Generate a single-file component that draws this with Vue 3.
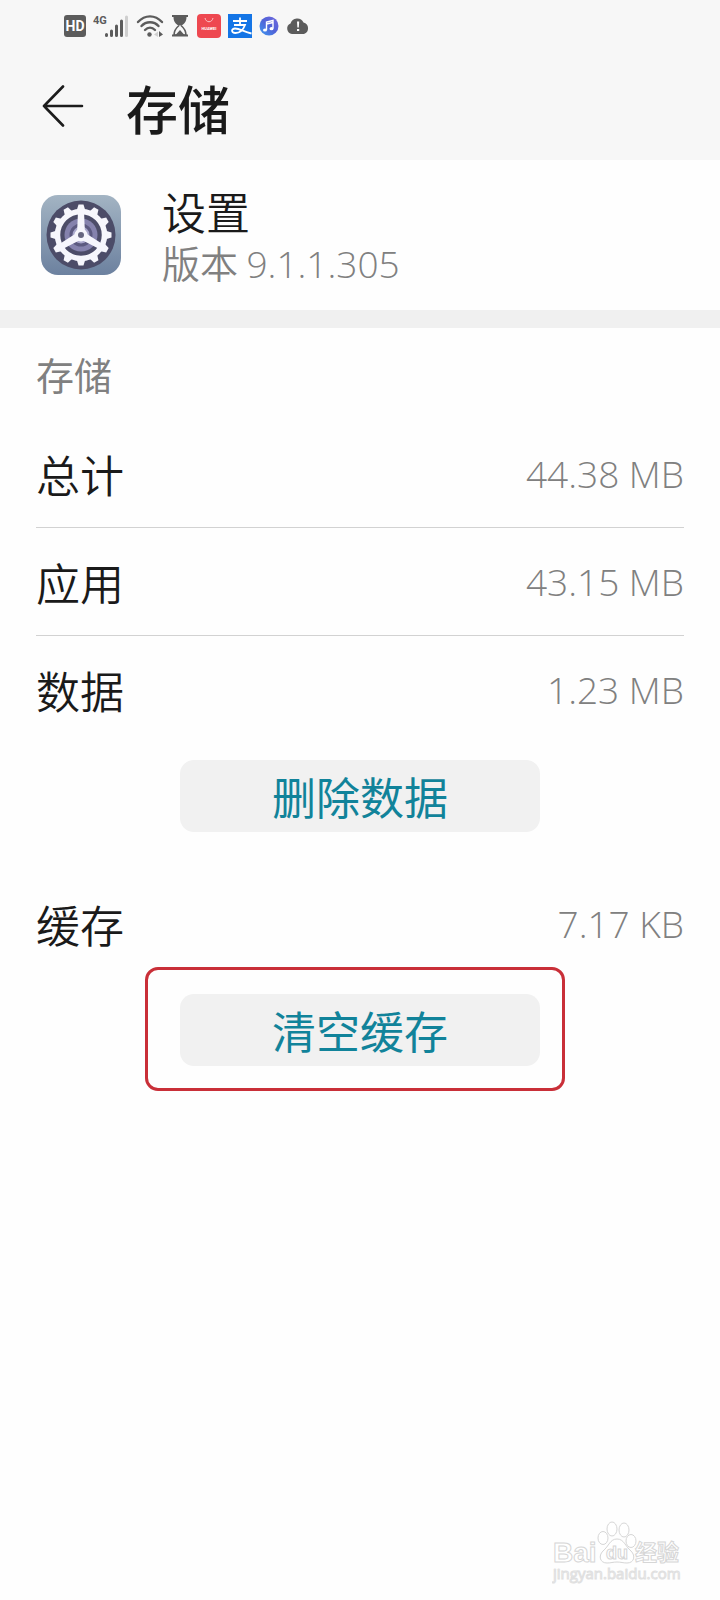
<script setup>
import { ref } from 'vue';

const sizes = [
    { id: 'total', label: '总计', value: '44.38 MB' },
    { id: 'app', label: '应用', value: '43.15 MB' },
    { id: 'data', label: '数据', value: '1.23 MB' },
];

const cacheSize = ref('7.17 KB');

const gearTeeth = Array.from({ length: 12 }, (_, index) => index * 30);
const gearSpokes = [0, 120, 240];
</script>

<template>
    <div class="storage-page">
        <header class="top">
            <div class="status-bar">
                <svg class="icon-hd" width="22" height="22" viewBox="0 0 22 22">
                    <rect width="22" height="22" rx="3" fill="#5c5c5c" />
                    <text x="11" y="16" class="hd-text" text-anchor="middle">HD</text>
                </svg>
                <svg class="icon-signal" width="36" height="24" viewBox="0 0 36 24">
                    <text x="0" y="10" class="signal-text">4G</text>
                    <g stroke="#5c5c5c" stroke-width="3" stroke-linecap="round">
                        <path d="M13.5 20.500V21.500M18.500 17V21.500M23.500 12V21.500M28.500 7V21.500" />
                        <path d="M33.500 3V21.500" stroke="#cfcfcf" />
                    </g>
                </svg>
                <svg class="icon-wifi" width="28" height="24" viewBox="0 0 28 24">
                    <g fill="none" stroke="#5c5c5c" stroke-width="2.400" stroke-linecap="round">
                        <path d="M2 8C9 .5 19 .5 26 8" />
                        <path d="M5.500 12C10 7 18 7 22.500 12" />
                        <path d="M9 16C12 13 16 13 19 16" />
                    </g>
                    <circle cx="13.500" cy="20.500" r="2.200" fill="#5c5c5c" />
                    <path d="M22 17.500L18 20.500L22 23Z" fill="#cfcfcf" />
                    <path d="M23 17L27 20.500L23 23Z" fill="#5c5c5c" />
                </svg>
                <svg class="icon-hourglass" width="18" height="22" viewBox="0 0 18 22">
                    <path d="M1 0H17V2H15.500C15.500 7 13 9 10.500 10.500H7.500C5 9 2.500 7 2.500 2H1Z" fill="#5c5c5c" />
                    <path d="M8 10.500C5 13 3 15 3 20H15C15 15 13 13 10 10.500" fill="none" stroke="#5c5c5c" stroke-width="1.600" />
                    <path d="M1 19.500H17V21.500H1ZM4.500 20L9 15L13.500 20Z" fill="#5c5c5c" />
                </svg>
                <svg class="icon-huawei" width="24" height="24" viewBox="0 0 24 24">
                    <rect width="24" height="24" rx="4" fill="#ee4850" />
                    <path d="M8 4C9 9 15 9 16 4" fill="none" stroke="#fbc4c6" stroke-width="1" />
                    <text x="12" y="16" class="huawei-text" text-anchor="middle">HUAWEI</text>
                </svg>
                <svg class="icon-alipay" width="24" height="24" viewBox="0 0 24 24">
                    <rect width="24" height="24" fill="#1475e6" />
                    <g fill="none" stroke="#fff" stroke-width="1.800">
                        <path d="M5 7H19M12 3.500V11M6 11H17C15.500 15 12 19 7.500 19C3 19 3 14.500 7 14.500C12 14.500 16 18 23.500 19.500" />
                    </g>
                </svg>
                <svg class="icon-music" width="20" height="20" viewBox="0 0 20 20">
                    <defs>
                        <linearGradient id="music-fill" x1="0" y1="1" x2="1" y2="0">
                            <stop offset="0" stop-color="#3d9af0" />
                            <stop offset="0.5" stop-color="#5063d8" />
                            <stop offset="1" stop-color="#7268dc" />
                        </linearGradient>
                    </defs>
                    <circle cx="10" cy="10" r="9.500" fill="url(#music-fill)" />
                    <path d="M7.500 14V6L14 4.500V12.500M7.500 8L14 6.500" fill="none" stroke="#fff" stroke-width="1.400" />
                    <ellipse cx="6" cy="14" rx="2" ry="1.600" fill="#fff" />
                    <ellipse cx="12.500" cy="12.700" rx="2" ry="1.600" fill="#fff" />
                </svg>
                <svg class="icon-cloud" width="24" height="18" viewBox="0 0 24 18">
                    <path d="M6 17A5.500 5.500 0 0 1 4.500 6.500A7 7 0 0 1 17.500 5.500A6 6 0 0 1 18 17Z" fill="#5c5c5c" />
                    <path d="M11 4.500H13.200L12.800 10.500H11.400ZM11 12H13.200V14H11Z" fill="#fff" />
                </svg>
            </div>
            <div class="title-bar">
                <button class="back-btn" type="button" aria-label="返回">
                    <svg width="42" height="42" viewBox="0 0 42 42">
                        <path d="M21 1.500L2 21L21 40.500M2 21H40" fill="none" stroke="#1c1c1c" stroke-width="2.600" stroke-linecap="round" stroke-linejoin="round" />
                    </svg>
                </button>
                <h1>存储</h1>
            </div>
        </header>

        <section class="app-info">
            <svg class="app-icon" width="82" height="82" viewBox="-1 -1 82 82">
                <defs>
                    <linearGradient id="icon-fill" x1="0" y1="0" x2="0" y2="1">
                        <stop offset="0" stop-color="#a3b4c3" />
                        <stop offset="1" stop-color="#6c819f" />
                    </linearGradient>
                </defs>
                <rect width="80" height="80" rx="17" fill="url(#icon-fill)" />
                <circle cx="40" cy="40" r="34.500" fill="#4c4c68" />
                <circle cx="40" cy="40" r="16.500" fill="#8582ad" />
                <circle cx="40" cy="40" r="11.500" fill="#5c5a80" />
                <circle cx="40" cy="40" r="8.500" fill="#aaa8cc" />
                <circle cx="40" cy="40" r="23.500" fill="none" stroke="#f6f6fc" stroke-width="5.500" />
                <g fill="#f6f6fc">
                    <path
                        v-for="angle in gearTeeth"
                        :key="angle"
                        d="M35.500 16L37.500 9.500H42.500L44.500 16Z"
                        :transform="`rotate(${angle} 40 40)`"
                    />
                    <path
                        v-for="angle in gearSpokes"
                        :key="angle"
                        d="M37 16H43L44 40H36Z"
                        :transform="`rotate(${angle} 40 40)`"
                    />
                    <circle cx="40" cy="40" r="6.500" />
                </g>
                <circle cx="40" cy="40" r="3" fill="#66667f" />
            </svg>
            <div class="app-text">
                <h2>设置</h2>
                <p>版本 <span class="number">9.1.1.305</span></p>
            </div>
        </section>

        <main class="storage">
            <h3>存储</h3>

            <div v-for="row in sizes" :key="row.id" class="row">
                <span>{{ row.label }}</span>
                <span class="number">{{ row.value }}</span>
            </div>
            <button class="action-btn" type="button">删除数据</button>

            <div class="row row-cache">
                <span>缓存</span>
                <span class="number">{{ cacheSize }}</span>
            </div>
            <button class="action-btn highlighted" type="button">清空缓存</button>
        </main>

        <footer class="watermark">
            <svg width="132" height="66" viewBox="0 0 132 66">
                <g fill="#fff" stroke="#d6d6d6" stroke-width="1">
                    <text x="1" y="42" class="mark-latin">Bai</text>
                    <ellipse cx="51" cy="18" rx="5" ry="6.500" />
                    <ellipse cx="60" cy="9" rx="5" ry="7" />
                    <ellipse cx="72" cy="10" rx="5" ry="7" />
                    <ellipse cx="79" cy="21" rx="5" ry="6.500" />
                    <path d="M65 19C58 19 57 26 51 31C46 36 48 43 55 43C59 43 61 42 65 42C69 42 71 43 75 43C82 43 84 36 79 31C73 26 72 19 65 19Z" />
                    <text x="54" y="39" class="mark-du">du</text>
                    <text x="83" y="40" class="mark-cjk">经验</text>
                </g>
                <text x="1" y="59" class="mark-url">jingyan.baidu.com</text>
            </svg>
        </footer>
    </div>
</template>

<style>
body {
    background: #fefefe;
}
</style>

<style scoped>
.storage-page {
    --text-color: #1a1a1a;
    --muted-color: #808080;
    --accent-color: #11839a;
    --panel-color: #f1f1f1;
    display: flex;
    flex-direction: column;
    min-height: 100vh;
    background: #fefefe;
    color: var(--text-color);
    font-family: 'Noto Sans CJK SC', sans-serif;
}

h1,
h2,
h3,
p {
    margin: 0;
}

svg {
    display: block;
    flex: none;
}

.top {
    background: #f7f7f7;
}

.status-bar {
    display: flex;
    align-items: center;
    gap: 7px;
    height: 52px;
    padding: 0 64px;
}

.icon-huawei {
    margin-left: 1px;
}

.hd-text {
    font: 700 14px 'Roboto', sans-serif;
    fill: #fff;
}

.signal-text {
    font: 700 11px 'Roboto', sans-serif;
    fill: #5c5c5c;
}

.huawei-text {
    font: 700 4px 'Roboto', sans-serif;
    fill: #fff;
}

.title-bar {
    display: flex;
    align-items: center;
    gap: 42px;
    height: 108px;
    padding: 0 42px;
}

.back-btn {
    padding: 0;
    border: 0;
    background: none;
    cursor: pointer;
}

.title-bar h1 {
    padding-top: 4px;
    font-size: 52px;
    font-weight: 500;
    line-height: 72px;
}

.app-info {
    display: flex;
    align-items: center;
    gap: 40px;
    padding: 24px 40px;
    border-bottom: 18px solid #f0f0f0;
}

.app-text h2 {
    font-size: 44px;
    font-weight: 350;
    line-height: 54px;
}

.app-text p {
    color: var(--muted-color);
    font-size: 38px;
    font-weight: 350;
    line-height: 48px;
}

.number {
    color: var(--muted-color);
    font-family: 'Open Sans', 'Noto Sans', sans-serif;
    font-size: 37px;
    font-weight: 300;
    line-height: 1;
}

.storage {
    padding: 0 36px;
}

.storage h3 {
    padding: 20px 0;
    color: var(--muted-color);
    font-size: 38px;
    font-weight: 400;
    line-height: 52px;
}

.row {
    display: flex;
    align-items: center;
    justify-content: space-between;
    height: 107px;
    border-bottom: 1px solid #d2d2d2;
    font-size: 44px;
    font-weight: 350;
}

.row:nth-of-type(3),
.row-cache {
    border-bottom-color: transparent;
}

.row-cache {
    margin-top: 38px;
}

.action-btn {
    position: relative;
    display: block;
    width: 360px;
    height: 72px;
    margin: 16px auto 0;
    padding: 0;
    border: 0;
    border-radius: 14px;
    background: var(--panel-color);
    color: var(--accent-color);
    font: 400 44px/72px 'Noto Sans CJK SC', sans-serif;
    cursor: pointer;
}

.highlighted::after {
    content: '';
    position: absolute;
    inset: -27px -25px -25px -35px;
    border: 3px solid #c92f38;
    border-radius: 13px;
}

.watermark {
    display: flex;
    justify-content: flex-end;
    margin-top: auto;
    padding: 0 36px 14px;
}

.mark-latin {
    font: 700 28px 'Liberation Sans', sans-serif;
}

.mark-du {
    font: 700 18px 'Liberation Sans', sans-serif;
}

.mark-cjk {
    font: 700 22px 'Noto Sans CJK SC', sans-serif;
}

.mark-url {
    font: 400 15px 'Open Sans', sans-serif;
    fill: #fff;
    stroke: #e0e0e0;
    stroke-width: 1px;
}
</style>
